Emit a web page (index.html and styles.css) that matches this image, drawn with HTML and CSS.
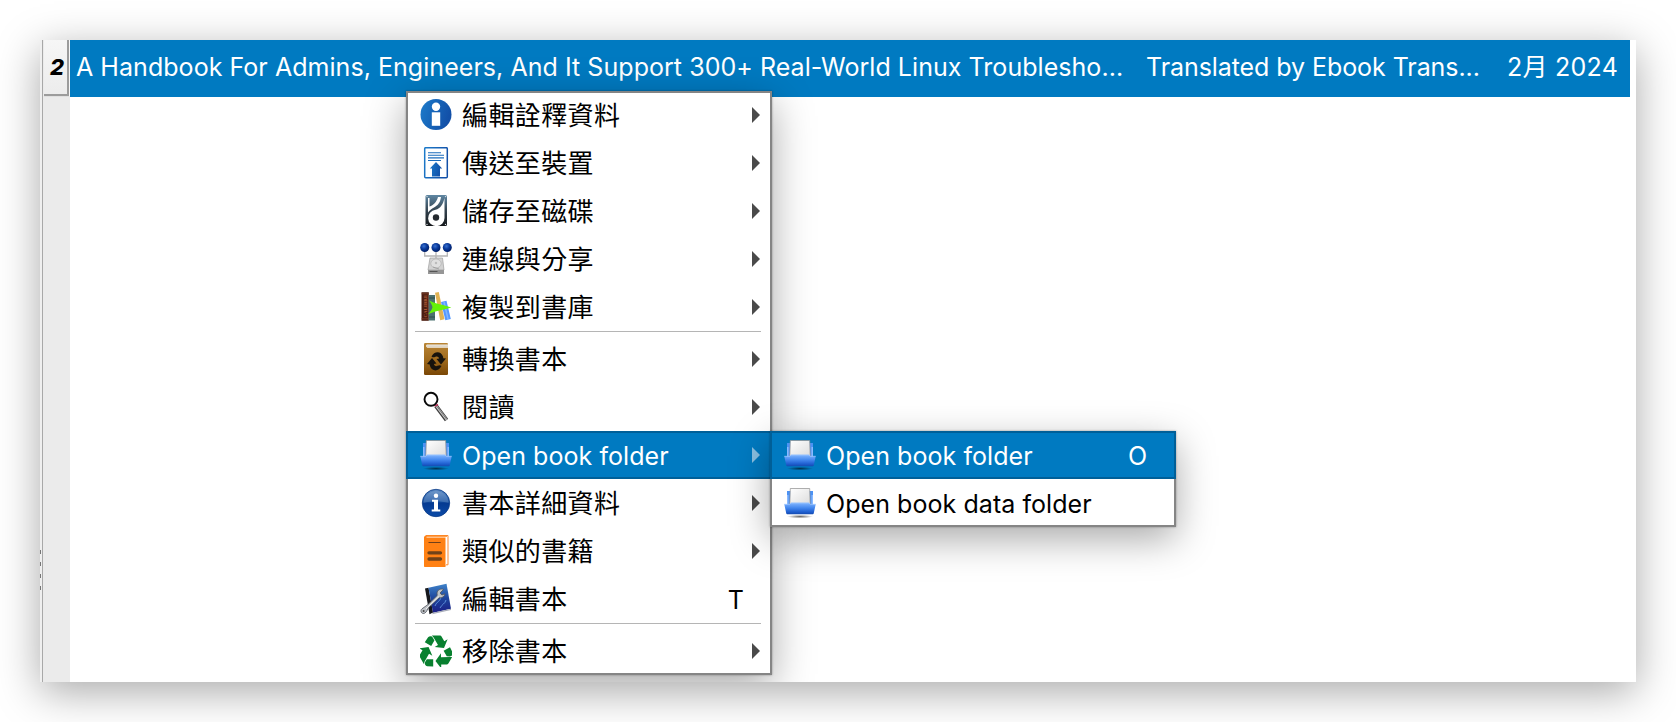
FILE: index.html
```html
<!DOCTYPE html>
<html lang="zh-Hant">
<head>
<meta charset="utf-8">
<title>Library</title>
<link rel="stylesheet" href="styles.css">
</head>
<body>
<svg class="defs" aria-hidden="true">
  <defs>
    <linearGradient id="blue" x1="0" x2="1" y1="0" y2="0.3"><stop offset="0" stop-color="#1d7ccb"/><stop offset="1" stop-color="#1250a8"/></linearGradient>
    <linearGradient id="disk" x1="0" x2="0" y1="0" y2="1"><stop offset="0" stop-color="#5f87a3"/><stop offset=".5" stop-color="#34434f"/><stop offset="1" stop-color="#15181b"/></linearGradient>
    <radialGradient id="ball" cx=".4" cy=".35" r=".65"><stop offset="0" stop-color="#3a72d0"/><stop offset=".5" stop-color="#0a3b9c"/><stop offset="1" stop-color="#001d66"/></radialGradient>
    <linearGradient id="gold" x1="0" x2="0" y1="0" y2="1"><stop offset="0" stop-color="#b98535"/><stop offset=".5" stop-color="#a06b1e"/><stop offset="1" stop-color="#7a4706"/></linearGradient>
    <linearGradient id="tray" x1="0" x2="0" y1="0" y2="1"><stop offset="0" stop-color="#82b6ff"/><stop offset=".45" stop-color="#4387ee"/><stop offset=".8" stop-color="#1f5fd0"/><stop offset="1" stop-color="#154bb0"/></linearGradient>
    <linearGradient id="paper" x1="0" x2="1" y1="0" y2="1"><stop offset="0" stop-color="#ffffff"/><stop offset="1" stop-color="#dcdcdc"/></linearGradient>
    <radialGradient id="shade"><stop offset="0" stop-color="#000" stop-opacity=".6"/><stop offset="1" stop-color="#000" stop-opacity="0"/></radialGradient>
    <linearGradient id="orb" x1="0" x2="0" y1="0" y2="1"><stop offset="0" stop-color="#5e8cc4"/><stop offset=".45" stop-color="#1b55a4"/><stop offset=".5" stop-color="#053a91"/><stop offset="1" stop-color="#0b4ba8"/></linearGradient>
    <linearGradient id="cover" x1="0" x2="0" y1="0" y2="1"><stop offset="0" stop-color="#3f83c9"/><stop offset=".5" stop-color="#1d449c"/><stop offset="1" stop-color="#1c1f86"/></linearGradient>
    <symbol id="folder" viewBox="0 0 32 32">
      <ellipse cx="16" cy="29.6" rx="13" ry="1.8" fill="url(#shade)"/>
      <path d="M3 4h4v14H3zM25 4h4v14h-4z" fill="#4c92f4"/>
      <path d="M3 8h1.500v10H3zM27.500 8H29v10h-1.500z" fill="#8abaff"/>
      <path d="M6.300 1.500h19.400l.5 16H5.800z" fill="url(#paper)" stroke="#8c8c8c" stroke-width=".7"/>
      <path d="M.3 17.300h5.500l1.200-1.500h18l1.200 1.500h5.500l-2 9.200c-.1.500-.4.700-.9.700H3.200c-.5 0-.8-.2-.9-.7z" fill="url(#tray)"/>
      <path d="M.3 17.300h5.500l1.200-1.300h18l1.200 1.300h5.500" fill="none" stroke="#a2c8ff" stroke-width=".7"/>
    </symbol>
    <symbol id="arrow" viewBox="0 0 8 16"><path d="M0 0l8 8-8 8z" fill="currentColor"/></symbol>
  </defs>
</svg>

<main class="window">
  <div class="splitter"><i></i><i></i><i></i><i></i></div>
  <div class="row-header"><div class="row-number">2</div></div>
  <div class="table">
    <div class="book-row">
      <span class="title">A Handbook For Admins, Engineers, And It Support 300+ Real-World Linux Troublesho...</span>
      <span class="author">Translated by Ebook Trans...</span>
      <span class="date">2月 2024</span>
    </div>
  </div>
</main>

<nav class="menu main-menu">
  <div class="item">
    <svg class="icon" viewBox="0 0 32 32"><circle cx="16" cy="15.500" r="15.500" fill="url(#blue)"/><circle cx="16" cy="7.700" r="4.200" fill="#fff"/><path d="M11.800 13.300h8.400v13.500h-8.400z" fill="#fff"/></svg>
    <span class="label zh">編輯詮釋資料</span><svg class="arrow"><use href="#arrow"/></svg>
  </div>
  <div class="item">
    <svg class="icon" viewBox="0 0 32 32"><rect x="4.700" y=".7" width="22.600" height="30" rx="1" fill="#fff" stroke="url(#blue)" stroke-width="1.500"/><path d="M8 5.700h13M8 8.300h16M8 10.900h16M8 13.500h13" stroke="#1d6dbd" stroke-width="1.100"/><path d="M16 15l6.200 6.500h-2.200V29.500h-8v-8H9.800z" fill="url(#blue)"/></svg>
    <span class="label zh">傳送至裝置</span><svg class="arrow"><use href="#arrow"/></svg>
  </div>
  <div class="item">
    <svg class="icon" viewBox="0 0 32 32"><rect x="5.500" y="0" width="21.500" height="31" rx="1.500" fill="url(#disk)"/><path d="M8 3h1.500v8.500c4-1.500 7-4 8.500-9.500h3c-.8 6-3.500 8.500-7 10.500-2.500 1.300-4.500 3-6 5z" fill="#fff"/><path d="M24.500 3v20a8.200 8.200 0 1 1-9-8.200c5-1.300 7.500-5.300 9-11.800z" fill="#fff"/><circle cx="16" cy="22.500" r="3.200" fill="#24292e"/><g fill="#dde5ea"><circle cx="7" cy="1.600" r=".7"/><circle cx="25.500" cy="1.600" r=".7"/><circle cx="7" cy="29.400" r=".7"/><circle cx="25.500" cy="29.400" r=".7"/></g></svg>
    <span class="label zh">儲存至磁碟</span><svg class="arrow"><use href="#arrow"/></svg>
  </div>
  <div class="item">
    <svg class="icon" viewBox="0 0 32 32"><path d="M4.700 8v5h22.600V8M16 8v8" fill="none" stroke="#b4b4b4" stroke-width="1.300"/><circle cx="4.700" cy="4.500" r="4.500" fill="url(#ball)"/><circle cx="16" cy="4.500" r="4.500" fill="url(#ball)"/><circle cx="27.300" cy="4.500" r="4.500" fill="url(#ball)"/><path d="M10 15h12.500l1.500 12H8z" fill="#d2d2d2" stroke="#9d9d9d" stroke-width=".7"/><ellipse cx="16" cy="20.500" rx="5.200" ry="4.500" fill="#e0e0e0" stroke="#a8a8a8" stroke-width=".6"/><circle cx="16" cy="20" r="1.200" fill="#bbb"/><path d="M13 24l6 2" stroke="#999" stroke-width=".8"/><path d="M8 27h16v4H8z" fill="#969696"/><path d="M9.500 28.500h8" stroke="#555"/></svg>
    <span class="label zh">連線與分享</span><svg class="arrow"><use href="#arrow"/></svg>
  </div>
  <div class="item">
    <svg class="icon" viewBox="0 0 32 32"><path d="M1.500 1.200h7.300v28.600H1.500z" fill="#4c1d10"/><path d="M1.500 2.800h7.300M1.500 27.800h7.300" stroke="#81422b" stroke-width=".8"/><text class="spine" transform="translate(7.100 26.500) rotate(-90)">CALIBRE</text><path d="M8.800 4h6.200v25.500H8.800z" fill="#4b716f"/><path d="M9 7h6M9 26h6" stroke="#2f4e4d"/><path d="M15 1.700l3.800-.7 5.700 27.300-4.300 1z" fill="#e1b354"/><path d="M21 11l5.500-1.200L30.800 28l-5.500 1.300z" fill="#5598ff"/><path d="M24 11l4 17" stroke="#80b5ff" stroke-width="1.500"/><path d="M9 9.500c5 2 7 3.300 14 4.500l8.300 2.500C25 18.500 14 20 8 23.500c2.500-3 4-5 4.500-7.200C12 14 11 12 9 9.500z" fill="#65f108"/></svg>
    <span class="label zh">複製到書庫</span><svg class="arrow"><use href="#arrow"/></svg>
  </div>
  <hr>
  <div class="item">
    <svg class="icon" viewBox="0 0 32 32"><rect x="4" y="0" width="24" height="32" rx="1.200" fill="url(#gold)"/><path d="M7 1.500h21v3.300H8C6 4.800 5.500 2 7 1.500z" fill="#f4f0e8"/><path d="M7 3.100h21" stroke="#b7aa92" stroke-width=".6"/><g fill="#17130d"><path id="turn" d="M11.500 13.500C14 8 21 7.500 23 13.500l.3 1.700 2.700.3-5 6-4.500-5.500 2.700-.5c-.6-1.800-2-2.500-3.700-1.700-1.600.8-3 .8-4-.3z"/><use href="#turn" transform="rotate(180 16.500 18.300)"/></g></svg>
    <span class="label zh">轉換書本</span><svg class="arrow"><use href="#arrow"/></svg>
  </div>
  <div class="item">
    <svg class="icon" viewBox="0 0 32 32"><path d="M16 15l10.500 14" stroke="#3d3d3d" stroke-width="4"/><path d="M16.500 15.300l10.300 13.500" stroke="#c9c9c9" stroke-width="2"/><path d="M17 15.500l10 13.200" stroke="#555" stroke-width=".7"/><path d="M14.500 15l3.500-1.500" stroke="#c4325c" stroke-width="1.500"/><circle cx="11" cy="8.300" r="6.500" fill="#fff" stroke="#090909" stroke-width="1.900"/></svg>
    <span class="label zh">閱讀</span><svg class="arrow"><use href="#arrow"/></svg>
  </div>
  <div class="item selected">
    <svg class="icon"><use href="#folder"/></svg>
    <span class="label">Open book folder</span><svg class="arrow"><use href="#arrow"/></svg>
  </div>
  <div class="item">
    <svg class="icon" viewBox="0 0 32 32"><circle cx="16" cy="16" r="13.700" fill="url(#orb)" stroke="#0a3a87" stroke-width=".8"/><path d="M3.500 16a12.500 12 0 0 1 25 0c-8-2.500-17-2.500-25 0z" fill="#fff" opacity=".15"/><circle cx="16" cy="8.700" r="2.200" fill="#fff"/><path d="M12 12.700h6v9.800h2.300v2h-8.600v-2H14v-7.800h-2z" fill="#fff"/></svg>
    <span class="label zh">書本詳細資料</span><svg class="arrow"><use href="#arrow"/></svg>
  </div>
  <div class="item">
    <svg class="icon" viewBox="0 0 32 32"><path d="M6 .5h22v29.300h-3" fill="none" stroke="#fb8a32" stroke-width="1"/><path d="M5.500 1.500h20V30" fill="none" stroke="#fff" stroke-width="1"/><path d="M5.200.6H27v1.200H6.500v.7h19V32H5c-.6 0-1-.4-1-1V2z" fill="#ff8114"/><path d="M8.500 7.500h12.200" stroke="#70401b" stroke-width="1"/><path d="M9 17.800h11.500M9 24h11.500" stroke="#704219" stroke-width="3.300" stroke-linecap="round"/></svg>
    <span class="label zh">類似的書籍</span><svg class="arrow"><use href="#arrow"/></svg>
  </div>
  <div class="item">
    <svg class="icon" viewBox="0 0 32 32"><path d="M5 5.500l3.500-.8 4.500 24.800-3.500 1.800z" fill="#16181d"/><path d="M8.500 4.700L26.500.8l4.500 25-18 4z" fill="url(#cover)"/><path d="M13 29.800l18-4v1.200L12 31.300z" fill="#a7acb8"/><path d="M15 23c2-5 5-4 6-9M20 25c2-4 5-4 6-8" fill="none" stroke="#77b1f5" stroke-width=".7"/><path d="M23.500 6.500c-3-1.300-6.200.5-6.500 3.500l.2 2.500L8 21.500l-6 4.300c-2.500 2-.2 6 2.800 4.300 2-1.200 2.700-4 4-5.800l10.200-9.500c3 .5 5.500-1.200 5.900-4l-3 1.200-1.900-2z" fill="#bfc3c8" stroke="#4d525a" stroke-width=".8"/><path d="M6 26l13-12.500" stroke="#f2f2f2" stroke-width="1"/><circle cx="3.600" cy="28" r="1" fill="#444"/></svg>
    <span class="label zh">編輯書本</span><span class="key">T</span>
  </div>
  <hr>
  <div class="item">
    <svg class="icon" viewBox="0 0 32 32"><g fill="#08802f"><g id="recycle-arm"><path d="M11.800.5h7.700c1 0 1.800.5 2.300 1.400l2.500 4.300L27.600 4.300 24 13l-9.300-1 3.300-1.900-4.400-7.500z"/><path d="M10.700 1.300c1 0 1.700.6 2.200 1.500l1.500 2.700-3.200 5.500-6.400-3.700 3.300-5c.6-.7 1.500-1 2.600-1z"/></g><use href="#recycle-arm" transform="rotate(120 16 17)"/><use href="#recycle-arm" transform="rotate(240 16 17)"/></g></svg>
    <span class="label zh">移除書本</span><svg class="arrow"><use href="#arrow"/></svg>
  </div>
</nav>

<nav class="menu sub-menu">
  <div class="item selected">
    <svg class="icon"><use href="#folder"/></svg>
    <span class="label">Open book folder</span><span class="key">O</span>
  </div>
  <div class="item">
    <svg class="icon"><use href="#folder"/></svg>
    <span class="label">Open book data folder</span>
  </div>
</nav>
</body>
</html>
```
FILE: styles.css
```css
* { box-sizing: border-box; }

body {
  margin: 0;
  width: 1676px;
  height: 722px;
  padding: 40px;
  overflow: hidden;
  position: relative;
  background: #fff;
  font-family: Inter, "Noto Sans CJK TC", sans-serif;
  font-size: 25px;
  color: #000;
}

.defs { position: absolute; width: 0; height: 0; }

.window {
  display: flex;
  width: 1596px;
  height: 642px;
  background: #fff;
  box-shadow: 0 10px 40px rgba(0, 0, 0, .34);
}

.splitter {
  width: 3px;
  background: #efefef;
  border-right: 1px solid #a8a8a8;
  display: flex;
  flex-direction: column;
  gap: 8px;
  padding-top: 510px;
}
.splitter i { width: 1px; height: 4px; background: #777; }

.row-header {
  width: 27px;
  padding-left: 1px;
  background: #ebebeb;
}
.row-number {
  width: 26px;
  height: 57px;
  padding-left: 6px;
  border-right: 1px solid #f7f7f7;
  border-bottom: 1px solid #e0e0e0;
  box-shadow: inset -2px -2px #9c9c9c;
  background: linear-gradient(#f6f6f6, #ececec);
  font-size: 22px;
  font-weight: 800;
  font-style: italic;
  line-height: 55px;
}

.table { flex: 1; padding-right: 6px; }
.book-row {
  display: grid;
  grid-template-columns: 1070px 361px 1fr;
  height: 57px;
  padding-left: 6px;
  background: #007ac1;
  color: #fff;
  line-height: 54px;
  white-space: nowrap;
}
.title { letter-spacing: .045px; }
.author { letter-spacing: -.07px; }
.date { letter-spacing: .25px; }

.menu {
  position: absolute;
  z-index: 0;
  background: #fff;
}
.menu::before {
  content: "";
  position: absolute;
  inset: 0;
  border: 2px solid #858585;
  pointer-events: none;
}
.main-menu {
  left: 406px;
  top: 91px;
  width: 366px;
  height: 584px;
  box-shadow: 0 0 2px rgba(0, 0, 0, .35);
}
/* The soft shadow stops at the window's lower edge. */
.main-menu::after {
  content: "";
  position: absolute;
  z-index: -1;
  inset: 0;
  box-shadow: 0 12px 38px rgba(0, 0, 0, .34);
  clip-path: inset(-60px -60px -7px -60px);
}
.sub-menu {
  left: 770px;
  top: 431px;
  width: 406px;
  height: 96px;
  box-shadow: 0 0 2px rgba(0, 0, 0, .35), 0 12px 38px rgba(0, 0, 0, .34);
}

.item {
  position: relative;
  display: flex;
  align-items: center;
  height: 48px;
  padding: 0 12px 0 14px;
}
.item.selected {
  background: #007ac1;
  border: 2px solid #005f98;
  padding: 0 10px 0 12px;
  color: #fff;
}
.icon { width: 32px; height: 32px; flex: none; }
.label {
  flex: 1;
  margin-left: 10px;
  padding-top: 2px;
  line-height: 46px;
  letter-spacing: .06px;
  white-space: nowrap;
}
.zh { font-size: 26px; letter-spacing: .4px; }
.arrow { width: 8px; height: 16px; flex: none; color: #4a4a4a; }
.selected .arrow { color: #8bc0e2; }
.key { padding-top: 2px; line-height: 46px; margin-right: 16px; }
.sub-menu .key { margin-right: 17px; }

hr {
  height: 4px;
  margin: 0 11px 0 9px;
  border: 0;
  border-top: 1px solid #b5b5b5;
}
.spine { font: 700 5px "Liberation Serif", serif; fill: #bd643e; }
```
